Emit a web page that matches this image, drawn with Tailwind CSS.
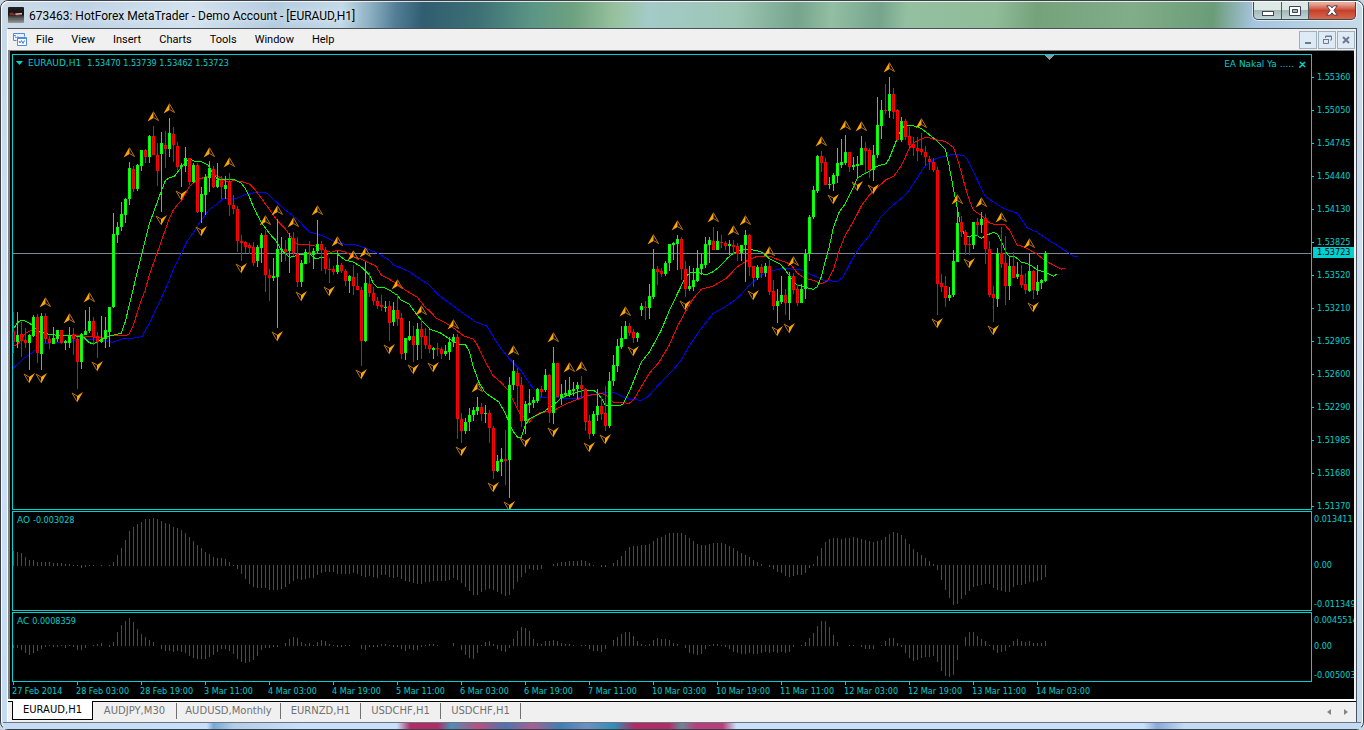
<!DOCTYPE html>
<html lang="en">
<head>
<meta charset="utf-8">
<title>673463: HotForex MetaTrader - Demo Account - [EURAUD,H1]</title>
<script src="https://cdn.jsdelivr.net/npm/@tailwindcss/browser@4"></script>
</head>
<body class="h-screen overflow-hidden bg-[#c9d6e2] font-['Roboto','Open_Sans',sans-serif] text-black">
<div class="flex h-full flex-col rounded-lg border border-[#3a4045] bg-linear-to-b from-[#c5d9ea] via-[#cfe2f7] to-[#c3dbf3] px-1.5 shadow-[inset_0_0_0_1px_#ffffffcc]">

  <header class="-mx-1.5 flex h-[27px] shrink-0 items-start rounded-t-lg border-x border-t border-white/80 bg-[linear-gradient(94deg,#ccdbe8_0%,#bfd3e6_6%,#d3e2ee_14%,#b5cce0_20%,#c3d9e8_25%,#8fb2c4_27%,#527d96_29%,#315d70_31%,#3d7075_35%,#5b9585_39%,#6da180_42%,#97c19c_45%,#a3cbc8_47.500%,#9bc6b4_54%,#76a48c_58.500%,#92bfa3_61%,#76a48c_64.500%,#93c0a0_66.500%,#8fbd98_73%,#73a27b_76%,#80ae88_83%,#6b9c78_89%,#a6c5df_92%,#c5dbe8_100%)] pl-1.5">
    <svg class="mt-[5px] size-4 shrink-0" viewBox="0 0 16 16" aria-hidden="true">
      <defs><linearGradient id="badge" x1="0" y1="0" x2="0" y2="1"><stop offset="0" stop-color="#222"/><stop offset=".45" stop-color="#111"/><stop offset=".6" stop-color="#444"/><stop offset="1" stop-color="#999"/></linearGradient></defs>
      <rect width="16" height="16" rx="1" fill="url(#badge)"/>
      <path d="M1 6l4-.6 1 1.6 3-.8 5-.4v2L9 9 7 8 2 8z" fill="#8b2a2c"/><path d="M7 6.5l7-.5v1.2l-6 .6z" fill="#ccc"/><path d="M1 12h13" stroke="#666"/>
    </svg>
    <h1 class="mt-1 ml-[5px] flex-1 truncate text-xs leading-5 [text-shadow:0_0_6px_#fff]">673463: HotForex MetaTrader - Demo Account - [EURAUD,H1]</h1>
    <div class="mr-1.5 flex h-[18px] shrink-0 overflow-hidden rounded-b-[5px] border border-t-0 border-[#3d4a50] bg-[#3d4a50] shadow-[0_0_0_1px_#ffffff99]">
      <button aria-label="Minimize" class="grid w-7 place-items-center border-r border-[#4b5a62] bg-linear-to-b from-[#dce9e4] from-45% via-[#a3b9b5] via-50% to-[#c2d5d8]">
        <svg class="mt-1.5 h-[5px] w-3" viewBox="0 0 12 5"><rect x=".5" y=".5" width="11" height="4" fill="#fff" stroke="#3f4358"/></svg>
      </button>
      <button aria-label="Restore" class="grid w-[27px] place-items-center border-r border-[#4b5a62] bg-linear-to-b from-[#dce9e4] from-45% via-[#a3b9b5] via-50% to-[#c2d5d8]">
        <svg class="h-[10px] w-3" viewBox="0 0 12 10"><path d="M.5.5h11v9H.5z" fill="#fff" stroke="#3f4358"/><path d="M3.5 3.5h5v3h-5z" fill="#a3b9b5" stroke="#3f4358"/></svg>
      </button>
      <button aria-label="Close" class="grid w-[46px] place-items-center bg-linear-to-b from-[#e8a999] from-10% via-[#c5402a] via-50% to-[#d8674a]">
        <svg class="h-[11px] w-3" viewBox="0 0 12 11"><path d="M.7.8h3.6L6 2.9 7.7.8h3.6L8 5.4l3.4 4.8H7.8L6 7.9l-1.8 2.3H.6L4 5.4z" fill="#fff" stroke="#4a3c48"/></svg>
      </button>
    </div>
  </header>

  <main class="flex min-h-0 flex-1 flex-col border-x border-t border-[#4b545a] border-l-white bg-[#f0f0f0]">
    <nav class="flex h-[21px] shrink-0 items-center pl-1 text-[11px]" aria-label="Main menu">
      <svg class="size-[15px]" viewBox="0 0 15 15" fill="none" aria-hidden="true"><path d="M3.5 4.5v-1H1.5v-2h11v3" stroke="#4c8be0"/><path d="M1.5 2.5v6h3" stroke="#4c8be0"/><path d="M3 6l1-1 1 1 1-2" stroke="#79a9ea"/><path d="M5.500 5.500h9v8h-9z" fill="#fff" stroke="#4c8be0"/><path d="M5.500 6.500h9" stroke="#4c8be0"/><path d="M7 9l1 2 1.500-2.500 1.500 3 1-2.500h1" stroke="#4c7fd8"/></svg>
      <ul class="ml-[9px] flex flex-1 gap-[18px] leading-4">
        <li><button>File</button></li><li><button>View</button></li><li><button>Insert</button></li><li><button>Charts</button></li><li><button>Tools</button></li><li><button>Window</button></li><li><button>Help</button></li>
      </ul>
      <div class="mr-px flex gap-px">
        <button aria-label="Minimize chart" class="grid size-[18px] place-items-center border border-[#9fb1bd] bg-[#deebf7]"><svg class="size-2.5" viewBox="0 0 10 10"><path d="M2 8h6" stroke="#6d7a8c" stroke-width="2"/></svg></button>
        <button aria-label="Restore chart" class="grid size-[18px] place-items-center border border-[#9fb1bd] bg-[#deebf7]"><svg class="size-2.5" viewBox="0 0 10 10" fill="none" stroke="#6d7a8c"><path d="M3.500 3V1h6v4H8"/><path d="M3 1.500h7M1 4.500h6"/><path d="M1.500 4v4.500h5V4"/></svg></button>
        <button aria-label="Close chart" class="grid size-[18px] place-items-center border border-[#9fb1bd] bg-[#deebf7]"><svg class="size-2.5" viewBox="0 0 10 10"><path d="M2 2l6 6M8 2L2 8" stroke="#6d7a8c" stroke-width="2"/></svg></button>
      </div>
    </nav>

    <div class="mr-0.5 flex min-h-0 flex-1 flex-col overflow-hidden border-t border-l-2 border-[#808080] bg-black pt-[3px] pl-0.5 font-['DejaVu_Sans_Condensed','DejaVu_Sans',sans-serif] text-[9px] text-[#00d0d0]">
      <section class="grid min-h-0 flex-1 grid-cols-[minmax(0,1fr)_42px]" aria-label="Price chart">
        <div class="relative min-h-0 border border-[#00d0d0]">
          <svg id="price" class="absolute inset-0 size-full" viewBox="13 55 1298 454" preserveAspectRatio="none" shape-rendering="crispEdges"></svg>
          <div class="relative flex items-start justify-between pr-[5px] pl-[3px] leading-4">
            <p class="flex items-center whitespace-pre"><svg class="mr-[5px] h-1 w-[7px]" viewBox="0 0 7 4"><path d="M0 0h7L3.500 4z" fill="#00d0d0"/></svg><span class="mr-1.5 font-['DejaVu_Sans',sans-serif]">EURAUD,H1</span>1.53470 1.53739 1.53462 1.53723</p>
            <p class="flex items-center gap-[5px] pt-px font-['DejaVu_Sans',sans-serif]">EA Nakal Ya ..... <svg class="size-[7px]" viewBox="0 0 7 7"><path d="M1 1l5 5M6 1L1 6M0 6h2" stroke="#00d0d0" stroke-width="1.500"/></svg></p>
          </div>
        </div>
        <div class="relative -mb-1 flex min-h-0 flex-col justify-between pt-[18px] pb-0.5 leading-[11px]" id="scale"></div>
      </section>

      <section class="mt-px grid h-[100px] shrink-0 grid-cols-[minmax(0,1fr)_42px]" aria-label="Awesome Oscillator">
        <div class="relative border border-[#00d0d0]">
          <svg id="ao" class="absolute inset-0 size-full" viewBox="13 512 1298 98" preserveAspectRatio="none" shape-rendering="crispEdges"></svg>
          <p class="relative pl-1 leading-[17px]"><span class="font-['DejaVu_Sans',sans-serif]">AO </span>-0.003028</p>
        </div>
        <div class="flex flex-col justify-between pt-[3px] pb-px pl-0.5 leading-[11px]"><span>0.013411</span><span class="pt-1.5">0.00</span><span>-0.011349</span></div>
      </section>

      <section class="mt-px grid h-[70px] shrink-0 grid-cols-[minmax(0,1fr)_42px]" aria-label="Accelerator Oscillator">
        <div class="relative border border-[#00d0d0]">
          <svg id="ac" class="absolute inset-0 size-full" viewBox="13 613 1298 68" preserveAspectRatio="none" shape-rendering="crispEdges"></svg>
          <p class="relative pl-1 leading-[17px]"><span class="font-['DejaVu_Sans',sans-serif]">AC </span>0.0008359</p>
        </div>
        <div class="flex flex-col justify-between pt-[3px] pb-px pl-0.5 leading-[11px]"><span>0.0045514</span><span class="pb-1">0.00</span><span>-0.005003</span></div>
      </section>

      <ol id="times" class="mr-[42px] flex h-[17px] shrink-0 overflow-visible leading-3"></ol>
    </div>

    <div class="flex h-[23px] shrink-0 items-start border-t-2 border-white">
      <div role="tablist" class="flex h-5 flex-1 items-stretch border-t border-black pl-1 font-['DejaVu_Sans',sans-serif] text-[10px] leading-[14px] text-[#707070]">
        <button role="tab" aria-selected="true" class="-mt-px mb-px w-[81px] border border-t-0 border-black bg-white text-black">EURAUD,H1</button>
        <button role="tab" class="mt-px mb-0.5 w-[84px] border-r border-[#707070]">AUDJPY,M30</button>
        <button role="tab" class="mt-px mb-0.5 w-[104px] border-r border-[#707070]">AUDUSD,Monthly</button>
        <button role="tab" class="mt-px mb-0.5 w-20 border-r border-[#707070]">EURNZD,H1</button>
        <button role="tab" class="mt-px mb-0.5 w-20 border-r border-[#707070]">USDCHF,H1</button>
        <button role="tab" class="mt-px mb-0.5 w-20 border-r border-[#707070]">USDCHF,H1</button>
        <span class="flex-1"></span>
        <button aria-label="Scroll left" class="mr-[13px]"><svg class="h-1.5 w-1" viewBox="0 0 4 6"><path d="M4 0v6L0 3z" fill="#858585"/></svg></button>
        <button aria-label="Scroll right" class="mr-2"><svg class="h-1.5 w-1" viewBox="0 0 4 6"><path d="M0 0v6l4-3z" fill="#858585"/></svg></button>
      </div>
    </div>
  </main>
  <footer class="-mx-1 h-[7px] shrink-0 border-t border-[#6a7683] bg-[linear-gradient(90deg,#c5dbf3_0%,#c8e0fa_15%,#79a9d8_15.500%,#b4cce6_17%,#c8e0fa_22%,#c8e0fa_29%,#b02c64_30%,#b02c64_32%,#4d8fb8_33%,#b8507d_35%,#4f74b0_37%,#a85f90_39%,#3f7fb6_41%,#6f8fc0_43%,#2f8fb8_45%,#b02c64_46.500%,#b02c64_49%,#6f859a_50%,#b8407a_51%,#b8407a_53%,#c8e0fa_54%,#c8e0fa_84%,#8aa9dc_85%,#c3dbf3_87%,#c3dbf3_100%)]"></footer>
</div>

<script>
// Each run: [first bar, y origin, "colour,high,bodyTop,bodyBottom,low ..."], heights in thirds of a unit.
const candles = [
[0,90,"r667,724,755,788 g667,735,755,775 r695,733,752,800 r715,750,758,773 g733,735,758,840 g675,682,737,740 r673,682,790,818 g670,678,791,840 r668,679,748,760 r738,748,760,778 g712,745,761,761 g720,720,746,755 r720,720,760,763 g750,754,760,780 g712,737,758,773 r715,732,748,795 r740,748,815,897 g730,733,815,836 g660,724,734,734 g652,693,724,730 r682,693,740,766 r727,739,757,803 g678,747,755,758 g682,720,748,773 g652,652,725,770 g369,433,650,653 g396,411,434,458 g337,373,412,422 g324,328,374,398 g216,235,328,344 r228,238,296,305 g222,226,298,302 g181,181,227,242 r178,181,200,218 g135,139,200,218 r108,139,196,196 r160,196,244,287 g126,160,191,366 r123,166,178,233 g84,130,178,200 r112,133,166,216 r156,168,230,240 g220,226,231,290 g171,205,228,245 r205,205,275,284 g218,226,275,278 r220,226,365,368 g290,312,365,398 g253,262,314,374 g213,234,263,305 r228,236,290,293 g219,270,290,293 r258,269,290,328 g258,286,296,328"],
[54,180,"r-22,4,76,107 r45,76,88,102 r78,88,184,216 r165,184,188,242 r182,187,200,220 r188,195,203,222 r187,202,250,258 g195,202,242,262 g158,166,203,248 r150,166,286,335 r267,286,293,362 g234,288,293,302 g117,207,290,443 g170,206,210,245 r180,208,215,242 g160,174,214,278 r156,175,219,228 r170,221,305,322 g240,250,305,322 g208,217,253,253 r182,215,219,248 g204,213,224,266 g120,192,213,218 r182,193,210,272 r202,210,268,283 r234,266,269,308 r257,268,275,284 g213,256,275,281 r250,256,274,280 r266,274,304,318 g284,289,304,338 r256,291,319,344 r280,319,331,331 r322,331,482,557 g245,310,483,486 r276,311,340,352 r322,340,364,374 r352,364,377,386 r346,376,382,392 g364,380,383,395 r362,379,428,482 g367,391,426,437 r343,391,416,437 r400,415,521,536 g475,475,518,540 g422,468,479,482 r438,469,494,545 g430,447,494,540 r420,448,470,536 r445,469,496,506 r450,496,508,518 g500,505,509,536 r490,505,508,527 r502,508,521,537 g494,514,521,527"],
[109,300,"g112,126,157,180 g102,112,127,141 r102,112,358,417 r340,358,392,428 g354,366,392,402 g324,346,366,393 g321,330,346,364 g291,321,332,344 r309,322,343,363 g315,339,343,368 r330,340,385,429 r378,384,512,537 g465,483,512,516 g444,477,485,528 r390,478,482,555 g231,256,481,593 g180,213,256,270 r204,220,257,322 r232,256,362,380 g303,312,362,402 g267,310,314,340 g291,300,310,323 g264,267,303,309 r258,267,275,291 g207,226,269,275 r222,226,339,368 g141,189,338,372 r189,189,292,292 g252,283,293,315 g240,280,284,290 g231,270,284,291 g246,268,272,288 g247,256,268,298 r228,256,268,291 r264,268,365,392 r345,364,401,416 g333,342,401,407 g267,319,345,363 r295,319,341,360 r258,339,377,393 g216,244,377,384 g165,195,244,258 g116,138,197,216 g78,114,140,146 g63,79,116,116 r70,79,98,108 r88,97,113,128 g96,100,113,126"],
[157,190,"g339,348,360,378 r333,351,354,390 g282,318,353,387 g177,238,320,327 r228,237,245,284 r234,244,252,261 g213,220,252,258 g163,163,220,242 g156,159,164,210 g135,147,161,240 r141,148,238,269 r213,237,297,321 g228,288,297,303 g234,270,290,303 g180,234,272,276 g189,222,237,255 g141,163,224,234 g141,150,164,218 r111,154,179,179 g123,154,179,179 r135,157,160,174 r153,159,167,180 g150,162,167,195 r150,165,170,192 r159,168,191,213 g166,166,190,213 g120,135,166,276 r132,135,230,258 r229,229,263,290 g225,230,263,269 r222,231,248,263 g219,228,248,261 r210,229,305,315 r270,304,347,359 g297,333,349,399 g258,315,336,342 r297,315,339,375 g246,259,339,390 r249,259,299,312 r285,297,338,347 g282,297,340,340 g177,192,298,326"],
[199,55,"g480,487,598,617 g393,405,487,491 g300,304,407,413 r288,304,323,350 r309,321,389,389 g366,386,389,402 g354,361,387,407 g279,324,362,383 g252,321,329,339 g240,291,324,329 r292,292,335,350 g306,330,335,345 g303,327,332,368 g243,280,329,329 r261,280,287,353 r279,286,344,368 g270,300,344,377 g126,211,301,308 g135,165,214,252 r87,165,168,177 g66,118,167,189 r99,118,170,192 r162,166,254,254 g186,199,254,261 r192,199,245,254 r216,243,269,275 r246,268,280,302 r246,280,288,318 r234,282,291,299 r273,290,306,332 r304,312,322,344 r310,321,346,350 r336,346,686,779 r657,685,695,711 r663,694,728,755 g696,720,728,738 g585,618,721,725"],
[236,130,"g237,280,395,395 r258,276,307,320 r300,306,344,374 r318,342,345,374 g277,277,344,356 r264,277,284,317 g246,267,285,308 r252,265,356,402 r333,357,494,500 r468,493,503,575 g354,370,506,531 r291,370,401,414 r318,400,467,524 g378,407,467,510 r366,408,443,443 g396,432,441,447 r405,436,464,474 r429,463,479,491 g369,423,483,486 r420,424,480,507 g405,456,482,495 g447,450,459,476 g363,370,452,455"]];

// Alligator lines: [x origin, y origin, points in thirds of a unit].
const jaw = [
[0,90,"40,835 70,806 100,786 112,772 130,762 160,757 200,755 260,748 300,748 336,757 376,744 388,746 426,740 448,700 484,624 508,570 520,538 544,490 560,456 580,428 604,390 628,358 652,342 668,326"],
[220,180,"24,56 52,54 80,42 120,36 142,40 160,58 196,90 232,118 268,156 304,166 340,184 376,193 400,192 440,206 472,219 508,240 520,254 568,275 604,300 628,315 652,342 672,358"],
[430,300,"46,0 94,36 136,65 170,78 190,110 214,148 238,176 274,212 298,250 334,294 370,290 400,297 440,294 470,286 500,283"],
[600,190,"-10,610 40,607 64,618 90,628 124,631 142,622 184,576 208,552 240,516 268,468 304,415 340,370 376,350 412,325 448,286 484,256 512,243"],
[780,55,"4,641 60,643 90,657 130,675 172,680 190,665 214,618 238,578 264,547 300,490 340,450 376,420 400,388 430,340"],
[920,130,"16,107 50,85 100,73 130,76 142,88 172,150 196,200 220,215 250,235 292,250 322,294 350,306 390,333 420,352 460,378 470,379"]];
const teeth = [
[0,90,"40,767 52,764 64,748 76,730 92,722 110,727 150,734 200,737 250,738 310,744 330,738 380,736 388,731 400,705 424,630 436,600 448,555 484,454 508,385 520,360 532,344 544,332 568,290 592,268 616,262 640,252 664,264"],
[220,180,"22,6 40,2 64,4 88,12 104,28 124,55 148,88 172,122 196,146 220,182 232,192 280,196 304,208 334,217 352,210 376,216 400,230 424,237 448,250 466,256 484,285 508,298 532,312 556,330 592,352 616,382"],
[430,300,"0,34 18,54 46,68 76,88 100,107 130,117 142,135 166,185 190,228 214,248 238,275 256,315 270,342 286,352 298,367 310,352 330,338 352,335 376,329 400,316 424,305 448,296 466,288 490,284"],
[600,190,"4,610 20,618 40,636 88,640 102,628 124,590 148,550 176,518 208,465 232,410 256,365 280,325 304,298 340,288 380,264 412,230 448,208 472,199 512,199 536,210"],
[780,55,"18,622 34,630 52,655 76,670 104,677 124,687 142,678 160,645 178,585 196,540 220,500 244,453 268,420 292,398 318,374 342,363 364,332 388,280 406,260"],
[920,130,"4,26 22,22 50,30 76,34 100,52 118,105 136,172 148,210 160,240 184,256 208,278 220,282 254,284 268,300 292,346 312,350 350,372 376,392 400,405 425,418 434,414"]];
const lips = [
[0,90,"40,718 52,698 66,690 84,697 100,708 112,722 148,733 184,737 220,737 250,741 268,758 280,761 298,752 316,741 364,730 376,695 390,636 412,546 448,402 472,336 484,303 496,272 506,264 524,258 544,231 568,207 584,214 604,215 624,225 636,247 652,266 664,269 690,268"],
[220,180,"46,0 64,10 76,25 88,50 100,80 112,105 124,128 148,160 166,180 184,210 208,232 238,225 268,221 286,236 310,232 328,219 352,222 376,240 400,246 424,261 448,284 460,310 472,321 490,322 508,330 532,346 544,361 568,373 580,390 604,421"],
[430,300,"0,88 30,98 60,118 88,135 106,133 118,155 130,200 148,250 166,278 190,295 206,305 226,340 238,370 250,395 262,411 274,411 286,375 298,357 322,345 346,332 370,315 394,294 418,284 436,279 460,271 490,271 502,278 514,295"],
[600,190,"16,646 52,648 68,644 88,605 124,516 148,487 184,420 208,362 232,312 250,275 262,256 274,246 292,246 316,255 340,245 364,225 382,205 400,190 424,180 448,178 472,182 488,188 508,206 540,222"],
[780,55,"16,645 34,670 50,690 100,703 112,695 124,665 136,618 148,575 160,518 178,470 196,446 214,410 232,370 250,358 266,350 290,334 318,326 328,310 340,280 352,250 364,222 376,211 412,214"],
[920,130,"10,0 44,27 76,58 88,110 100,175 112,235 124,295 136,318 148,320 160,315 172,317 184,325 200,316 220,307 232,312 244,333 256,363 268,380 286,381 304,396 328,403 352,420 376,426 400,439 411,432"]];

// Fractals: bar:y of the glyph's top edge.
const fractalsUp = "8:297 14:313 19:292 29:147 35:111 39:103 49:147 54:157 63:215 66:205 70:217 76:205 81:236 85:250 88:247 96:279 102:305 110:319 116:382 125:345 135:332 139:362 142:361 153:306 160:234 166:220 175:212 180:225 183:215 189:246 195:256 202:136 208:120 212:121 219:62 227:118 236:194 242:197 247:212 254:238";
const fractalsDown = "4:373 7:373 16:392 21:361 37:215 42:190 47:226 57:263 66:331 72:291 79:286 87:369 94:344 100:364 105:362 112:446 120:482 124:501 128:437 135:427 144:442 148:434 155:346 168:300 185:290 191:326 194:323 205:194 211:181 215:184 231:318 239:258 245:325 255:302";

// Oscillator bars: colour and end position in thirds of a unit below y=500; "-" is an empty slot.
const aoBars = "r153 r156 r159 r171 r180 r180 r186 r186 r186 g186 r189 r189 g189 r192 g192 r195 r196 r204 g201 g197 g195 - g195 - g196 g186 g165 g144 g120 g93 g81 g72 g66 g57 g57 g54 r57 r63 r69 r72 r81 r84 r90 r99 r111 r123 r135 r144 r156 r162 r171 r174 r174 r177 r186 r195 r207 r222 r237 r252 r261 r264 g264 r264 r270 r270 r270 g267 g261 g252 g243 g237 r240 g237 g234 g234 g225 g219 g216 r216 g216 r222 r222 r222 g222 g219 r222 r228 r231 g228 r231 r234 g225 g225 r231 r234 g231 r237 r243 r246 r249 r252 g252 g246 g246 g243 g243 g243 g243 g240 g234 r240 r249 r261 r273 r285 g285 g276 g270 g267 r270 r276 r282 r288 g285 g267 g246 g231 g219 g207 r210 g210 g207 - - g192 g189 g186 r186 g183 g183 r183 g180 r183 r189 r195 - r201 r201 - g189 g180 g168 g153 g141 g138 r138 g135 g135 g132 g123 g114 g111 g105 g99 g99 g99 r99 r105 r114 r123 r132 r135 g135 g132 g129 g129 r129 r132 r138 r144 r153 r159 r165 r171 r180 r186 r192 - r201 r207 r216 r219 r228 r231 g228 g225 r225 g219 g204 g192 g168 g144 g126 g117 g114 r114 r117 g114 g114 g111 r114 r117 r120 r123 r126 g123 g120 g111 g102 g96 r99 r105 r117 r132 r147 r156 r165 r174 r183 r192 r210 r240 r270 r294 r315 g312 g297 g285 g273 g261 g258 g255 g252 r252 r264 r270 r273 r276 g276 g261 g255 r255 g252 g246 g246 g243 g240 g231";
const acBars = "r444 g444 r450 r459 r465 g459 g453 g447 g441 g435 r441 g441 g435 r444 g435 r441 r450 r450 g444 - g435 g432 g429 - r441 g426 g396 g375 g363 g354 r366 r387 r402 r411 r420 r426 - r447 r453 r453 r456 g453 r456 r459 r468 r474 r477 g477 r477 g471 g465 g456 g447 g447 r453 r462 r477 r486 r489 g486 g480 g468 g450 g444 r444 g441 g441 - g429 g417 g411 r414 r426 r432 g429 r435 g426 g420 r423 r432 r435 r441 g441 g435 g435 - - r447 r450 g441 g441 r441 g432 r432 r435 r441 g441 r447 r453 g447 r450 g450 g441 g435 g432 g432 r435 - - - g429 - r450 r465 r474 r477 g459 g435 g426 g423 r432 r447 r453 r456 g444 g417 g393 g381 r384 r393 r417 r429 r432 g423 r423 g420 r423 r429 r432 g432 r435 - g435 r435 r447 r453 r453 r456 g447 - g420 g411 g402 g396 r396 r408 r423 r432 r435 g432 g420 g414 r417 r417 r420 r429 r432 - r444 r459 r462 r465 g462 g447 g435 g432 g432 r435 r441 r447 r456 r459 r462 r462 g459 r462 g462 g459 g456 r459 g456 r459 g456 r459 g456 g441 - g435 g426 g414 g399 g378 g363 r363 r381 r405 r426 - - g435 g435 - r441 r447 r447 g447 - g435 g423 g414 g414 r429 r441 r459 r474 r483 g480 g474 g471 g471 g468 r486 r513 r528 r531 g525 g480 - g411 g396 r396 r408 r417 r423 r435 r450 r459 g456 g453 g441 g423 g417 r423 r426 g423 r429 g429 g429 g423";

const px = v => Math.round(v / 3);
const barX = i => 13 + 4 * i;
const rect = (x, y, w, h, f) => `<rect x="${x}" y="${y}" width="${w}" height="${Math.max(h, 1)}" fill="${f}"/>`;

let out = rect(13, 253, 1298, 1, "#778899");
for (const [line, colour] of [[jaw, "#0000ff"], [teeth, "#ff0000"], [lips, "#00ff00"]]) {
  const pts = line.flatMap(([x0, y0, s]) => s.split(" ").map(p => { const [x, y] = p.split(","); return [x0 + x / 3, y0 + y / 3]; }));
  out += `<polyline fill="none" stroke="${colour}" points="${pts.map(p => p.map(n => n.toFixed(1)).join(",")).join(" ")}"/>`;
}
for (const [start, y0, run] of candles) run.split(" ").forEach((bar, k) => {
  const [hi, top, bottom, lo] = bar.slice(1).split(",").map(v => y0 + px(+v));
  const up = bar[0] === "g", edge = up ? "#00ff00" : "#ff0000", x = barX(start + k);
  out += rect(x, hi, 1, lo - hi, edge) + rect(x - 1, top, 3, bottom - top, edge);
  if (bottom - top > 2) out += rect(x, top + 1, 1, bottom - top - 2, up ? "#60ff00" : "#800040");
});
const glyphUp = '<path d="M.5 0L-5.500 10.500 .5 7z" fill="#ffa500"/><path d="M.5 1L5.500 9.500 .5 6.500" fill="none" stroke="#b87414"/>';
const glyphDown = '<path d="M0 10.500L6 0 0 4z" fill="#ffa500"/><path d="M0 9.500L-5 1 0 4" fill="none" stroke="#b87414"/>';
const fractals = (list, glyph) => list.split(" ").map(f => {
  const [i, y] = f.split(":");
  return `<g shape-rendering="auto" transform="translate(${barX(+i)} ${y})">${glyph}</g>`;
}).join("");
out += fractals(fractalsUp, glyphUp) + fractals(fractalsDown, glyphDown);
out += '<path d="M1044 55h10l-5 5z" fill="#8896a8"/>';
document.getElementById("price").innerHTML = out;

const histogram = (id, bars, zero) => {
  document.getElementById(id).innerHTML = bars.split(" ").map((b, i) => {
    if (b === "-") return "";
    const end = 500 + px(+b.slice(1)), top = Math.min(end, zero), bottom = Math.max(end, zero + 1);
    return rect(barX(i), top, 1, bottom - top, b[0] === "g" ? "#008000" : "#ff0000");
  }).join("");
};
histogram("ao", aoBars, 565);
histogram("ac", acBars, 645);

document.getElementById("scale").innerHTML =
  "1.55360 1.55050 1.54745 1.54440 1.54130 1.53825 1.53520 1.53210 1.52905 1.52600 1.52290 1.51985 1.51680 1.51370".split(" ")
  .map(t => `<span class="flex items-center gap-[3px]"><i class="h-px w-0.5 bg-[#00d0d0]"></i>${t}</span>`).join("") +
  '<strong class="absolute top-[193px] left-px w-full bg-[#00d0d0] pl-1 font-normal text-black">1.53723</strong>';
document.getElementById("times").innerHTML =
  "27 Feb 2014|28 Feb 03:00|28 Feb 19:00|3 Mar 11:00|4 Mar 03:00|4 Mar 19:00|5 Mar 11:00|6 Mar 03:00|6 Mar 19:00|7 Mar 11:00|10 Mar 03:00|10 Mar 19:00|11 Mar 11:00|12 Mar 03:00|12 Mar 19:00|13 Mar 11:00|14 Mar 03:00".split("|")
  .map(t => `<li class="w-16 shrink-0 whitespace-nowrap"><i class="ml-px block h-[3px] w-px bg-[#00d0d0]"></i>${t}</li>`).join("");
</script>
</body>
</html>
